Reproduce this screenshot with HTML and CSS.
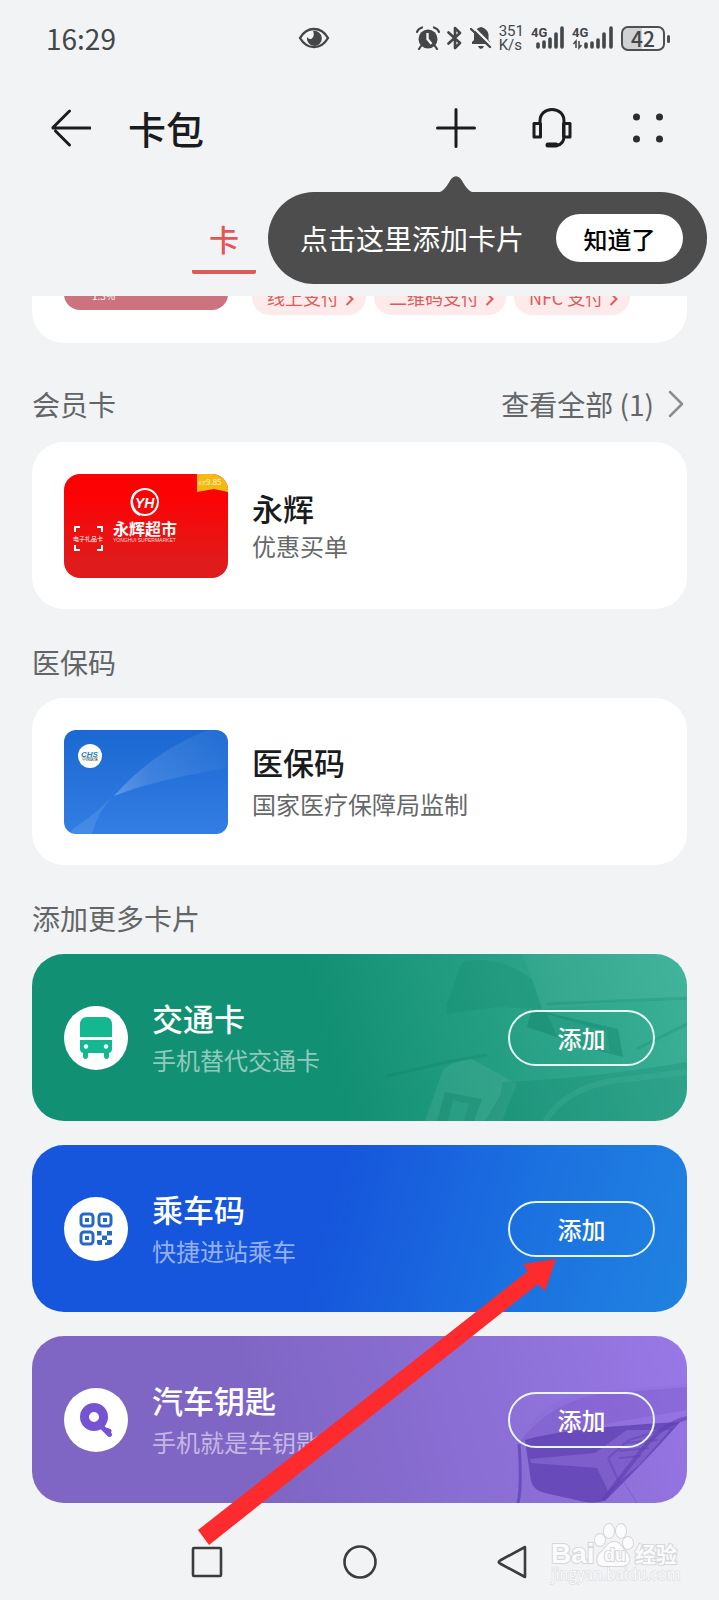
FILE: index.html
```html
<!DOCTYPE html>
<html lang="zh-CN">

<head>
    <meta charset="UTF-8">
    <meta name="viewport" content="width=device-width, initial-scale=1.0">
    <title>卡包</title>
    <link rel="stylesheet" href="styles.css">
</head>

<body>
    <div class="status-bar">
        <span class="time">16:29</span>
        <svg class="eye" width="32" height="24" viewBox="0 0 32 24">
            <path d="M2 12C9 0 23 0 30 12C23 24 9 24 2 12Z" fill="none" stroke="#444648" stroke-width="2.4" stroke-linejoin="round" />
            <path d="M15 5A7.500 7.500 0 1 1 9 11Q11 14 14 12.500Q17 9 15 5Z" fill="#444648" />
        </svg>
        <div class="status-icons">
            <svg width="24" height="24" viewBox="0 0 24 24">
                <circle cx="12" cy="13" r="9.500" fill="#444648" />
                <path d="M1 6Q2 3 6 1.500M23 6Q22 3 18 1.500M5 20L3 23M19 20L21 23" fill="none" stroke="#444648" stroke-width="2.200" stroke-linecap="round" />
                <path d="M11.500 7V13L15.500 18" fill="none" stroke="#f1f3f5" stroke-width="2.400" />
            </svg>
            <svg width="16" height="24" viewBox="0 0 16 24">
                <path d="M1.500 6.500L13 17L8 22V2L13 7L1.500 17.500" fill="none" stroke="#444648" stroke-width="2.600" stroke-linejoin="round" stroke-linecap="round" />
            </svg>
            <svg width="22" height="24" viewBox="0 0 22 24">
                <path d="M2 18V16L4 14V9C4 5 7 2 11 1C15 2 18.500 5 18.500 9V14L20 16V18ZM8 20H14Q13 23 11 23Q9 23 8 20Z" fill="#444648" />
                <path d="M3 1L23 21" stroke="#f1f3f5" stroke-width="2.400" />
                <path d="M1 3L20 21" stroke="#444648" stroke-width="2.400" stroke-linecap="round" />
            </svg>
            <span class="speed">351<br>K/s</span>
            <svg width="34" height="26" viewBox="0 0 34 26">
                <text x="0" y="12" class="net">4G</text>
                <path d="M7 19V22M13 17V22M19 14V22M25 9V22M31 3V22" stroke="#444648" stroke-width="3.600" stroke-linecap="round" />
            </svg>
            <svg width="42" height="26" viewBox="0 0 42 26">
                <text x="0" y="12" class="net">4G</text>
                <path d="M4 23V16L1.500 19M7 16V23L9.500 20" fill="none" stroke="#444648" stroke-width="1.500" />
                <path d="M14 19V22M20 18V22M26 15V22M32 9V22M39 3V22" stroke="#444648" stroke-width="3.600" stroke-linecap="round" />
            </svg>
            <span class="battery">42</span>
        </div>
    </div>

    <header>
        <button type="button" class="icon-button" aria-label="返回">
            <svg width="40" height="40" viewBox="0 0 40 40" class="line-icon">
                <path d="M2 20H39M18.500 3L2 19.500M4.500 23L18.500 37" />
            </svg>
        </button>
        <h1>卡包</h1>
        <div class="actions">
            <button type="button" class="icon-button" aria-label="添加">
                <svg width="40" height="40" viewBox="0 0 40 40" class="line-icon">
                    <path d="M20 1.500V38.500M1.500 20H38.500" />
                </svg>
            </button>
            <button type="button" class="icon-button" aria-label="客服">
                <svg width="40" height="40" viewBox="0 0 40 40" class="line-icon">
                    <path d="M8 15V13C8 6 13 1.500 20 1.500S32 6 32 13V28Q32 36 25 37.500M2 15.500H8.500V29H2ZM31.500 15.500H38V29H31.500Z" />
                    <path d="M16 37H24" class="thick" />
                </svg>
            </button>
            <button type="button" class="icon-button" aria-label="更多">
                <svg width="40" height="40" viewBox="0 0 40 40" fill="#2b2d2f">
                    <circle cx="8.500" cy="9" r="3.500" />
                    <circle cx="31.500" cy="9" r="3.500" />
                    <circle cx="8.500" cy="31" r="3.500" />
                    <circle cx="31.500" cy="31" r="3.500" />
                </svg>
            </button>
        </div>
        <div class="tooltip">
            <svg class="tip" width="42" height="17" viewBox="0 0 42 17">
                <path d="M0 17C10 17 12 8 17 2Q21 -1.500 25 2C30 8 32 17 42 17Z" fill="#4d4d4d" />
            </svg>
            <span>点击这里添加卡片</span>
            <button type="button" class="got-it">知道了</button>
        </div>
    </header>

    <nav class="tabs">
        <a href="#cards" class="active">卡</a>
    </nav>

    <main id="cards">
        <div class="card peek">
            <div class="thumb bank"><span>1.3%</span></div>
            <div class="chips">
                <a href="#">线上支付 <svg width="9" height="14" viewBox="0 0 9 14"><path d="M1.500 1L7.500 7L1.500 13" /></svg></a>
                <a href="#">二维码支付 <svg width="9" height="14" viewBox="0 0 9 14"><path d="M1.500 1L7.500 7L1.500 13" /></svg></a>
                <a href="#">NFC 支付 <svg width="9" height="14" viewBox="0 0 9 14"><path d="M1.500 1L7.500 7L1.500 13" /></svg></a>
            </div>
        </div>

        <div class="section-head member-head">
            <h2>会员卡</h2>
            <a href="#">查看全部 (1)
                <svg width="16" height="28" viewBox="0 0 16 28"><path d="M2 2L14 14L2 26" fill="none" stroke="#8b8d8f" stroke-width="2.500" stroke-linecap="round" stroke-linejoin="round" /></svg>
            </a>
        </div>
        <div class="card">
            <svg class="thumb" width="164" height="104" viewBox="0 0 164 104">
                <defs>
                    <linearGradient id="red" x1="0" y1="0" x2="0" y2="1">
                        <stop offset="0.200" stop-color="#fd0204" />
                        <stop offset="0.850" stop-color="#e01b1b" />
                    </linearGradient>
                </defs>
                <rect width="164" height="104" fill="url(#red)" />
                <path d="M133 0H164V18L150 15L133 18Z" fill="#f5b912" />
                <text x="134" y="11" fill="#fff7d0" font-size="4">会员</text>
                <text x="142" y="11" fill="#fff7d0" font-size="8">9.85</text>
                <circle cx="81" cy="28" r="13" fill="none" stroke="#fff" stroke-width="2" />
                <path d="M73 17A14 14 0 0 0 76 41" fill="none" stroke="#fff" stroke-width="2" />
                <text x="71" y="34" fill="#fff" font-size="14" font-weight="700" font-style="italic" class="latin">YH</text>
                <text x="49" y="61" fill="#fff" font-size="16" font-weight="700">永辉超市</text>
                <text x="49" y="68" fill="#ffd9d4" font-size="5" class="latin">YONGHUI SUPERMARKET</text>
                <text x="9" y="67" fill="#fff" font-size="6">电子礼品卡</text>
                <path d="M11 58V53H16M33 53H38V58M11 71V76H16M33 76H38V71" fill="none" stroke="#fff" stroke-width="2" />
            </svg>
            <div class="info">
                <h3>永辉</h3>
                <p>优惠买单</p>
            </div>
        </div>

        <div class="section-head">
            <h2>医保码</h2>
        </div>
        <div class="card">
            <svg class="thumb medical" width="164" height="104" viewBox="0 0 164 104">
                <defs>
                    <linearGradient id="blue" x1="0" y1="0" x2="0" y2="1">
                        <stop offset="0" stop-color="#1b68d2" />
                        <stop offset="1" stop-color="#327ee4" />
                    </linearGradient>
                    <linearGradient id="shine" x1="0" y1="0" x2="1" y2="0">
                        <stop offset="0" stop-color="#fff" stop-opacity="0.250" />
                        <stop offset="0.300" stop-color="#fff" stop-opacity="0.120" />
                        <stop offset="1" stop-color="#fff" stop-opacity="0.030" />
                    </linearGradient>
                </defs>
                <rect width="164" height="104" fill="url(#blue)" />
                <path d="M50 66C78 34 112 12 145 0H164V38C120 45 80 54 50 66Z" fill="url(#shine)" />
                <path d="M10 98C28 86 42 74 56 58C40 75 32 88 28 104H5Z" fill="#fff" fill-opacity="0.100" />
                <circle cx="26" cy="26" r="12" fill="#fff" />
                <text x="17" y="27" fill="#1583bd" font-size="8" font-weight="700" font-style="italic" class="latin">CHS</text>
                <text x="18" y="31" fill="#333" font-size="4">中国医保</text>
            </svg>
            <div class="info spaced">
                <h3>医保码</h3>
                <p>国家医疗保障局监制</p>
            </div>
        </div>

        <div class="section-head">
            <h2>添加更多卡片</h2>
        </div>
        <div class="more">
            <div class="card banner green">
                <svg class="scene" width="300" height="167" viewBox="0 0 300 167">
                    <path d="M60 50L75 8Q110 0 145 25L155 55L110 53L60 60Z" fill="#0a7a62" fill-opacity="0.150" />
                    <path d="M145 25L155 55L300 44V0H135Z" fill="#fff" fill-opacity="0.040" />
                    <path d="M145 55L231 75L236 103L205 95L140 73Z" fill="#08745c" fill-opacity="0.300" />
                    <path d="M160 60L220 78L223 98L170 82Z" fill="#35ac90" fill-opacity="0.400" />
                    <path d="M0 122L60 108L100 101M160 50L300 44M250 95L300 70" fill="none" stroke="#08745c" stroke-opacity="0.180" stroke-width="3" />
                    <path d="M38 167L55 118Q60 108 85 105L130 130L115 167Z" fill="#fff" fill-opacity="0.070" />
                    <path d="M50 167L58 138L95 145L87 167Z" fill="#0a7a62" fill-opacity="0.300" />
                    <path d="M61 167L66 146L82 150L77 167Z" fill="#35ac90" fill-opacity="0.400" />
                    <path d="M115 128Q200 125 300 108V167H98L114 140Z" fill="#087a62" fill-opacity="0.200" />
                    <path d="M158 167Q178 135 225 127L300 118" fill="none" stroke="#53bea5" stroke-opacity="0.200" stroke-width="6" />
                </svg>
                <div class="badge">
                    <svg width="34" height="42" viewBox="0 0 34 42">
                        <path d="M8 0H26Q33 0 33 8V20H1V8Q1 0 8 0ZM1 23H33V32Q33 35 30 36V39Q30 42 27.500 42Q25 42 25 39V36H9V39Q9 42 6.500 42Q4 42 4 39V36Q1 35 1 32Z" fill="#14b890" />
                        <circle cx="7" cy="29.500" r="2.200" fill="#fff" />
                        <circle cx="27" cy="29.500" r="2.200" fill="#fff" />
                    </svg>
                </div>
                <div class="info spaced">
                    <h3>交通卡</h3>
                    <p>手机替代交通卡</p>
                </div>
                <button type="button" class="add">添加</button>
            </div>
            <div class="card banner blue">
                <div class="badge">
                    <svg width="34" height="34" viewBox="0 0 34 34">
                        <g fill="none" stroke="#2668c8" stroke-width="3">
                            <rect x="2" y="2" width="12" height="12" rx="3" />
                            <rect x="20" y="2" width="12" height="12" rx="3" />
                            <rect x="2" y="20" width="12" height="12" rx="3" />
                        </g>
                        <path d="M6 6H10V10H6ZM24 6H28V10H24ZM6 24H10V28H6ZM18 19H22.500V23.500H18ZM28 19H33V23.500H28ZM23 23.500H28V28H23ZM18 28H23V33H20Q18 33 18 31ZM28 28H33V31Q33 33 31 33H26V30.500H28Z" fill="#2668c8" />
                    </svg>
                </div>
                <div class="info spaced">
                    <h3>乘车码</h3>
                    <p>快捷进站乘车</p>
                </div>
                <button type="button" class="add">添加</button>
            </div>
            <div class="card banner purple">
                <svg class="scene" width="172" height="167" viewBox="0 0 172 167">
                    <path d="M5 106Q30 55 90 55L172 48V167H3Z" fill="#6742b8" fill-opacity="0.060" />
                    <path d="M5 106Q35 66 85 58L172 51V74L100 86L20 104Z" fill="#6742b8" fill-opacity="0.200" />
                    <path d="M3 167Q7 150 4 108" fill="none" stroke="#5d3eb0" stroke-opacity="0.700" stroke-width="3" />
                    <path d="M10 104Q50 92 165 86Q140 115 92 163Q85 168 70 166L30 157Q18 154 16 145Z" fill="#5f41b3" fill-opacity="0.800" />
                    <path d="M15 123L80 117L112 94H155L125 128L93 155L82 132L16 127Z" fill="#8465d0" fill-opacity="0.750" />
                    <path d="M93 122L114 104L160 90M93 122L104 146M108 107L143 104M104 115L134 112M104 122L126 120" fill="none" stroke="#6f50c0" stroke-width="2" />
                    <path d="M172 82Q145 88 120 123L88 164" fill="none" stroke="#5f40b2" stroke-opacity="0.600" stroke-width="4" />
                    <path d="M108 145L122 167" stroke="#6f4dc0" stroke-opacity="0.500" />
                </svg>
                <div class="badge">
                    <svg width="34" height="34" viewBox="0 0 34 34">
                        <circle cx="15" cy="14" r="9.500" fill="none" stroke="#7554d4" stroke-width="9" />
                        <path d="M21 22L30.500 31.500M27 27L30 28" fill="none" stroke="#7554d4" stroke-width="5" stroke-linecap="round" />
                    </svg>
                </div>
                <div class="info spaced">
                    <h3>汽车钥匙</h3>
                    <p>手机就是车钥匙</p>
                </div>
                <button type="button" class="add">添加</button>
            </div>
            <!-- red pointer to the ride code button -->
            <svg class="pointer" width="360" height="288" viewBox="0 0 360 288">
                <path d="M0 272L330 13L325 6L358 1L347 33L340 26L11 287Z" fill="#fd2b2d" />
            </svg>
        </div>
    </main>

    <footer>
        <button type="button" class="icon-button" aria-label="最近任务">
            <svg width="34" height="34" viewBox="0 0 34 34" class="nav-icon"><rect x="3" y="3" width="28" height="28" rx="1" /></svg>
        </button>
        <button type="button" class="icon-button" aria-label="主页">
            <svg width="34" height="34" viewBox="0 0 34 34" class="nav-icon"><circle cx="17" cy="17" r="15.500" /></svg>
        </button>
        <button type="button" class="icon-button" aria-label="后退">
            <svg width="34" height="34" viewBox="0 0 34 34" class="nav-icon"><path d="M29 2V32L4 18.500Q1.500 17 4 15.500Z" /></svg>
        </button>
        <svg class="watermark" width="136" height="68" viewBox="0 0 136 68">
            <text x="4" y="41" font-size="28" font-weight="700" class="latin">Bai</text>
            <ellipse cx="53" cy="18" rx="5" ry="6" />
            <ellipse cx="62" cy="9" rx="5" ry="7" />
            <ellipse cx="74" cy="9" rx="5" ry="7" />
            <ellipse cx="81" cy="21" rx="5" ry="6" />
            <path d="M67 20C74 20 75 27 80 31C86 39 80 45 73 44H58C50 45 48 37 53 31C59 27 60 20 67 20Z" />
            <text x="57" y="39" font-size="18" font-weight="700" class="latin">du</text>
            <text x="88" y="40" font-size="21" font-weight="700">经验</text>
            <text x="4" y="58" font-size="15" class="url">jingyan.baidu.com</text>
        </svg>
    </footer>
</body>

</html>
```
FILE: styles.css
```css
* {
    box-sizing: border-box;
}

body {
    margin: 0;
    font-family: "Noto Sans CJK SC", sans-serif;
    background-color: #f1f3f5;
    color: #191b1d;
}

h1,
h2,
h3,
p {
    margin: 0;
    font-weight: 400;
}

a {
    text-decoration: none;
    color: inherit;
}

button {
    font-family: inherit;
    padding: 0;
    border: none;
    background: none;
    cursor: pointer;
}

svg {
    display: block;
    flex-shrink: 0;
}

.latin {
    font-family: "Liberation Sans", sans-serif;
}

/* status bar */
.status-bar {
    display: grid;
    grid-template-columns: 3fr 32px 4fr;
    align-items: center;
    height: 76px;
    padding: 0 54px 0 46px;
    color: #444648;
}

.time {
    font-size: 28px;
    line-height: 32px;
}

.status-icons {
    display: flex;
    align-items: center;
    justify-content: flex-end;
    gap: 7px;
}

.speed {
    font-family: Roboto, sans-serif;
    font-size: 15px;
    line-height: 14px;
}

.net {
    font-family: Roboto, sans-serif;
    font-size: 13px;
    font-weight: 700;
    fill: #444648;
}

.battery {
    position: relative;
    width: 44px;
    height: 25px;
    border: 2px solid #4d4f51;
    border-radius: 7px;
    background: linear-gradient(to right, #cfd1d3 48%, #f1f3f5 48%);
    font-size: 21px;
    font-weight: 500;
    line-height: 20px;
    text-align: center;
}

.battery::after {
    content: "";
    position: absolute;
    right: -7px;
    top: 7px;
    width: 3px;
    height: 8px;
    border-radius: 2px;
    background-color: #4d4f51;
}

/* header */
header {
    position: relative;
    display: flex;
    align-items: center;
    height: 104px;
    padding: 0 51px;
}

.icon-button {
    display: flex;
}

.line-icon {
    fill: none;
    stroke: #1b1d1f;
    stroke-width: 3;
    stroke-linecap: round;
    stroke-linejoin: round;
}

.thick {
    stroke-width: 5;
}

h1 {
    margin-left: 37px;
    font-size: 38px;
    font-weight: 500;
    line-height: 48px;
}

.actions {
    display: flex;
    gap: 56px;
    margin-left: auto;
}

.tooltip {
    position: absolute;
    z-index: 2;
    right: 12px;
    top: 116px;
    display: flex;
    align-items: center;
    gap: 32px;
    height: 92px;
    padding: 0 24px 0 32px;
    border-radius: 46px;
    background-color: #4d4d4d;
    color: #fff;
    font-size: 28px;
    white-space: nowrap;
}

.tip {
    position: absolute;
    right: 230px;
    top: -16px;
}

.got-it {
    width: 127px;
    height: 48px;
    border-radius: 24px;
    background-color: #fff;
    color: #000;
    font-size: 24px;
    font-weight: 500;
}

.tabs {
    display: flex;
    height: 116px;
    padding-left: 192px;
}

.tabs .active {
    width: 64px;
    height: 94px;
    padding-top: 36px;
    border-bottom: 4px solid #dc5a5c;
    border-radius: 2px;
    color: #e15658;
    font-size: 30px;
    font-weight: 500;
    line-height: 44px;
    text-align: center;
}

/* card list */
main {
    padding: 0 32px;
}

.card {
    display: flex;
    align-items: center;
    height: 167px;
    padding: 0 32px;
    border-radius: 32px;
    background-color: #fff;
}

.thumb {
    width: 164px;
    height: 104px;
    border-radius: 16px;
}

.medical {
    border-radius: 12px;
}

.peek {
    align-items: flex-end;
    height: 47px;
    padding-bottom: 33px;
    border-radius: 0 0 32px 32px;
    overflow: hidden;
}

.bank {
    padding: 84px 0 0 28px;
    background-color: #cd737f;
    color: #fff;
    font-size: 10px;
    line-height: 12px;
}

.chips {
    display: flex;
    gap: 8px;
    margin: 0 0 -5px 24px;
}

.chips a {
    display: flex;
    align-items: center;
    gap: 6px;
    height: 36px;
    padding: 0 12px 0 15px;
    border-radius: 18px;
    background-color: #fdebeb;
    color: #dc5c5e;
    font-size: 18px;
    white-space: nowrap;
}

.chips svg {
    margin-top: 4px;
}

.chips path {
    fill: none;
    stroke: #dc5c5e;
    stroke-width: 2;
}

.section-head {
    display: flex;
    align-items: center;
    justify-content: space-between;
    height: 89px;
    padding: 29px 0 12px;
    color: #636567;
    font-size: 28px;
    line-height: 48px;
}

.member-head {
    height: 99px;
    padding: 37px 3px 14px 0;
}

.section-head a {
    display: flex;
    align-items: center;
    gap: 14px;
}

h2 {
    font-size: 28px;
}

.info {
    margin-left: 24px;
}

h3 {
    font-size: 31px;
    font-weight: 500;
    line-height: 40px;
}

.info p {
    color: #66686a;
    font-size: 24px;
    line-height: 36px;
}

.spaced p {
    margin-top: 4px;
}

/* banners */
.more {
    position: relative;
    display: flex;
    flex-direction: column;
    gap: 24px;
}

.banner {
    position: relative;
    overflow: hidden;
    color: #fff;
}

.green {
    background: linear-gradient(75deg, #129073 45%, #3cb198);
}

.blue {
    background: linear-gradient(105deg, #1656dc 45%, #1c72e0 75%, #2082e0);
}

.purple {
    background: linear-gradient(75deg, #7f66c4 35%, #9878e6);
}

.scene {
    position: absolute;
    right: 0;
    top: 0;
}

.badge {
    display: flex;
    align-items: center;
    justify-content: center;
    width: 64px;
    height: 64px;
    border-radius: 50%;
    background-color: #fff;
}

.banner .info p {
    color: rgba(255, 255, 255, 0.55);
}

.add {
    position: relative;
    width: 147px;
    height: 56px;
    margin-left: auto;
    border: 2px solid #e8f6f5;
    border-radius: 28px;
    color: #fff;
    font-size: 24px;
    font-weight: 500;
}

.pointer {
    position: absolute;
    right: 129px;
    bottom: -43px;
}

/* system navigation */
footer {
    position: relative;
    display: flex;
    align-items: center;
    justify-content: center;
    gap: 119px;
    height: 97px;
    padding-top: 20px;
}

.nav-icon {
    fill: none;
    stroke: #3a3c3e;
    stroke-width: 2.6;
    stroke-linejoin: round;
}

.watermark {
    position: absolute;
    right: 36px;
    top: 19px;
    fill: #fbfbfc;
    stroke: #d5d7d9;
    stroke-width: 2;
    paint-order: stroke;
}

.url {
    stroke-width: 1;
}
```
